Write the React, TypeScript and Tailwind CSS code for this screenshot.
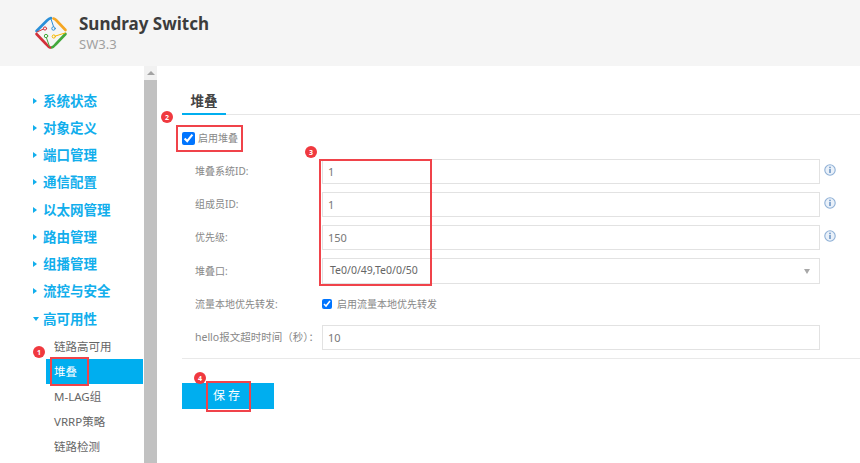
const font = "font-['Noto_Sans','Noto_Sans_CJK_SC',sans-serif]";

const menu = ["系统状态", "对象定义", "端口管理", "通信配置", "以太网管理", "路由管理", "组播管理", "流控与安全"];
const subMenu = ["链路高可用", "堆叠", "M-LAG组", "VRRP策略", "链路检测"];

function Logo() {
  return (
    <svg width="34" height="34" viewBox="0 0 34 34" fill="none" strokeLinecap="round" strokeLinejoin="round">
      <path d="M2.5 15 L13 4.5 Q15 2.5 17 2" stroke="#2a8fd8" strokeWidth="2.6" />
      <path d="M19.5 2.5 Q21 3 22 4 L31.5 14" stroke="#f5a623" strokeWidth="2.6" />
      <path d="M31.5 18 L21.5 28.5 Q19.5 31 17.5 31.5" stroke="#43a83c" strokeWidth="2.6" />
      <path d="M2.5 18 L12.5 28.5 Q14.5 31 16 31.5" stroke="#d2313a" strokeWidth="2.6" />
      <path d="M17 3 L19.5 10.5" stroke="#2a8fd8" strokeWidth="1" />
      <circle cx="19.5" cy="12.5" r="1.7" stroke="#2a8fd8" strokeWidth="1" />
      <path d="M3 16 L9.5 13" stroke="#d2313a" strokeWidth="1" />
      <circle cx="11" cy="12.5" r="1.6" stroke="#d2313a" strokeWidth="1" />
      <path d="M31 17 L21.5 20" stroke="#f5b800" strokeWidth="1" />
      <circle cx="19.8" cy="20.5" r="1.6" stroke="#f5b800" strokeWidth="1" />
      <path d="M15.5 30.5 L12.5 22" stroke="#43a83c" strokeWidth="1" />
      <circle cx="12" cy="20" r="1.7" stroke="#43a83c" strokeWidth="1" />
    </svg>
  );
}

function Info() {
  return (
    <svg width="12" height="12" viewBox="0 0 12 12" className="shrink-0">
      <circle cx="6" cy="6" r="5.2" fill="#eaf1f9" stroke="#8fb0d6" strokeWidth="1.1" />
      <rect x="5.2" y="5" width="1.6" height="4" fill="#6f96c6" />
      <rect x="5.2" y="2.7" width="1.6" height="1.5" fill="#6f96c6" />
    </svg>
  );
}

function Row({ label, children, info, wide }: { label: string; children: React.ReactNode; info?: boolean; wide?: boolean }) {
  return (
    <div className="flex items-center">
      <label className={`w-[127px] shrink-0 whitespace-nowrap text-[#888] ${wide ? "text-[10.5px]" : "text-[10px]"}`}>{label}</label>
      <div className="w-[498px] shrink-0">{children}</div>
      {info && (
        <span className="ml-[4px] -mt-[3px]">
          <Info />
        </span>
      )}
    </div>
  );
}

function TextBox({ value }: { value: string }) {
  return (
    <input
      defaultValue={value}
      className="block h-[25px] w-full border border-[#e2e2e2] bg-white px-[5px] text-[11px] text-[#777] outline-none"
    />
  );
}

function Mark({ n, className }: { n: number; className: string }) {
  return (
    <span className={`absolute flex h-[12px] w-[12px] items-center justify-center rounded-full bg-[#f0393f] text-[7px] leading-none font-bold text-white ${className}`}>
      {n}
    </span>
  );
}

export default function App() {
  return (
    <div className={`relative flex h-[463px] w-[860px] flex-col overflow-hidden bg-white ${font}`}>
      <header className="flex h-[66px] shrink-0 items-center gap-[11px] bg-[#f5f5f5] pl-[34px]">
        <Logo />
        <div className="-mt-[1px]">
          <div className="text-[17px] leading-[23px] font-bold text-[#3c3c3c]">Sundray Switch</div>
          <div className="text-[13px] leading-[18px] text-[#a0a0a0]">SW3.3</div>
        </div>
      </header>

      <div className="flex min-h-0 flex-1">
        <aside className="flex w-[144px] shrink-0 flex-col pt-[21px]">
          {menu.map((m) => (
            <div key={m} className="flex h-[27.25px] items-center pl-[33px] text-[13.5px] font-bold text-[#11aeec]">
              <span className="mr-[6px] h-0 w-0 border-y-[3px] border-l-[4px] border-y-transparent border-l-[#11aeec]" />
              {m}
            </div>
          ))}
          <div className="flex h-[27.25px] items-center pl-[33px] text-[13.5px] font-bold text-[#11aeec]">
            <span className="mr-[4px] h-0 w-0 border-x-[3px] border-t-[4px] border-x-transparent border-t-[#11aeec]" />
            高可用性
          </div>
          <ul className="mt-[2px]">
            {subMenu.map((s) => (
              <li
                key={s}
                className={`mr-[1px] ml-[46px] flex h-[25px] items-center pl-[8px] text-[11.5px] text-[#666] ${s === "堆叠" ? "bg-[#00aeef] text-white" : ""}`}
              >
                {s}
              </li>
            ))}
          </ul>
        </aside>

        <div className="flex w-[13px] shrink-0 flex-col bg-[#f1f1f1]">
          <div className="flex h-[14px] shrink-0 items-center justify-center">
            <span className="h-0 w-0 border-x-[4px] border-b-[4px] border-x-transparent border-b-[#a3a3a3]" />
          </div>
          <div className="flex-1 bg-[#c1c1c1]" />
        </div>

        <main className="min-w-0 flex-1 pt-[26px]">
          <div className="ml-[25px] border-b border-[#e6e6e6]">
            <div className="-mb-px flex h-[23px] w-[44px] justify-center border-b-2 border-[#00aeef] text-[13.5px] leading-[18px] font-bold text-[#444]">
              堆叠
            </div>
          </div>

          <div className="mt-[17px] ml-[25px] flex h-[13px] items-center gap-[3px] text-[10px] text-[#888]">
            <input type="checkbox" defaultChecked className="m-0 h-[13px] w-[13px]" />
            启用堆叠
          </div>

          <div className="mt-[14px] ml-[38px] flex flex-col gap-[8px]">
            <Row label="堆叠系统ID:" info>
              <TextBox value="1" />
            </Row>
            <Row label="组成员ID:" info>
              <TextBox value="1" />
            </Row>
            <Row label="优先级:" info>
              <TextBox value="150" />
            </Row>
            <Row label="堆叠口:">
              <div className="flex h-[26px] items-center justify-between border border-[#e2e2e2] pr-[9px] pl-[7px] text-[10.5px] text-[#666]">
                Te0/0/49,Te0/0/50
                <span className="h-0 w-0 border-x-[3.5px] border-t-[5px] border-x-transparent border-t-[#a8a8a8]" />
              </div>
            </Row>
            <div className="-mt-[1px]">
              <Row label="流量本地优先转发:">
                <div className="flex h-[26px] items-center gap-[5px] text-[10px] text-[#888]">
                  <input type="checkbox" defaultChecked className="m-0 h-[10px] w-[10px]" />
                  启用流量本地优先转发
                </div>
              </Row>
            </div>
            <Row label="hello报文超时时间（秒）：" wide>
              <TextBox value="10" />
            </Row>
          </div>

          <div className="mt-[8px] ml-[25px] border-t border-[#e9e9e9]" />

          <button className="mt-[24px] ml-[25px] block h-[26px] w-[92px] bg-[#00aeef] text-[12px] tracking-[3px] text-white">
            保存
          </button>
        </main>
      </div>

      <div className="absolute top-[357px] left-[50px] h-[29px] w-[39px] border-2 border-[#f0434a]" />
      <div className="absolute top-[125px] left-[176px] h-[27px] w-[67px] border-2 border-[#f0434a]" />
      <div className="absolute top-[159px] left-[319px] h-[127px] w-[113px] border-2 border-[#f0434a]" />
      <div className="absolute top-[381px] left-[206px] h-[31px] w-[45px] border-2 border-[#f0434a]" />
      <Mark n={1} className="top-[346px] left-[33px]" />
      <Mark n={2} className="top-[111px] left-[161px]" />
      <Mark n={3} className="top-[146px] left-[305px]" />
      <Mark n={4} className="top-[372px] left-[194px]" />
    </div>
  );
}
